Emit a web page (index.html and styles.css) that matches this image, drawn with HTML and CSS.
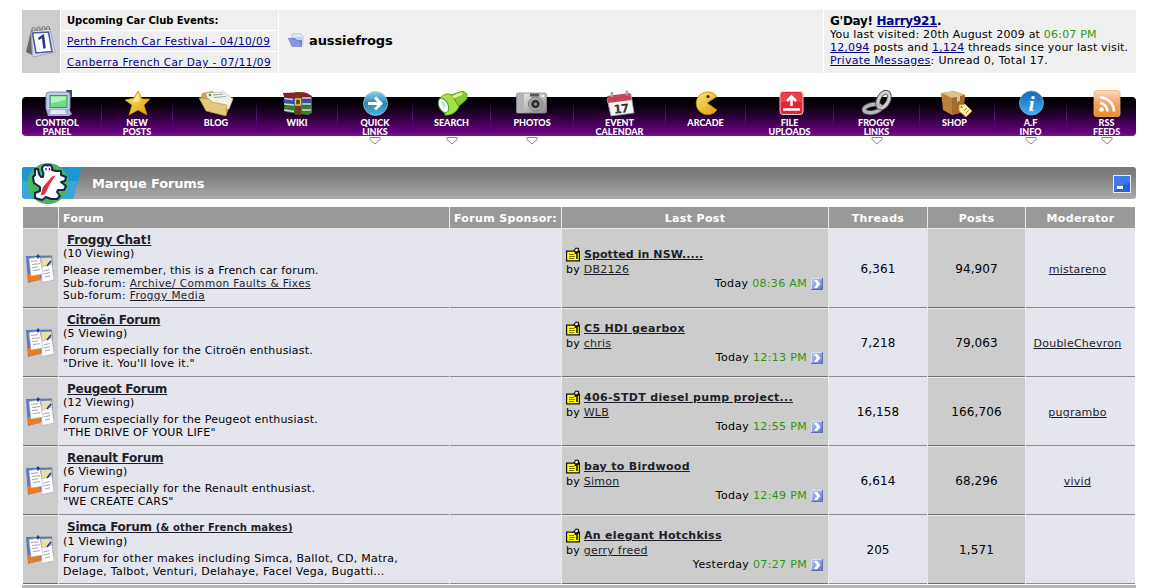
FILE: index.html
```html
<!DOCTYPE html>
<html lang="en">
<head>
<meta charset="utf-8">
<title>aussiefrogs</title>
<link rel="stylesheet" href="styles.css">
</head>
<body>
<svg class="defs" width="0" height="0">
  <defs>
    <linearGradient id="gb" x1="0" y1="0" x2="0" y2="1"><stop offset="0" stop-color="#8fd0ea"/><stop offset=".5" stop-color="#2a86b4"/><stop offset="1" stop-color="#43b9dc"/></linearGradient>
    <linearGradient id="gi" x1="0" y1="0" x2="0" y2="1"><stop offset="0" stop-color="#1b62b4"/><stop offset="1" stop-color="#3fb2f0"/></linearGradient>
    <linearGradient id="gr" x1="0" y1="0" x2="0" y2="1"><stop offset="0" stop-color="#fbd9bd"/><stop offset=".5" stop-color="#f0a468"/><stop offset="1" stop-color="#ee8a20"/></linearGradient>
    <linearGradient id="gy" x1="0" y1="0" x2="1" y2="1"><stop offset="0" stop-color="#ffe873"/><stop offset="1" stop-color="#e09a08"/></linearGradient>
    <linearGradient id="gm" x1="0" y1="0" x2="1" y2="1"><stop offset="0" stop-color="#f4f4f4"/><stop offset="1" stop-color="#8c8c8c"/></linearGradient>
    <linearGradient id="gbtn" x1="0" y1="0" x2="1" y2="1"><stop offset="0" stop-color="#c2cef2"/><stop offset="1" stop-color="#5a74c8"/></linearGradient>
    <symbol id="clip" viewBox="0 0 28 31">
      <path d="M0 3L26 2.500 27.500 22 2 30Z" fill="#5a78c8"/>
      <path d="M1.500 21L14 21 15 27 2.500 29.500Z" fill="#e87c24"/>
      <path d="M15 5L25.500 4.500 26.500 17 16 16Z" fill="#e8e0a0"/>
      <path d="M15 14L26 11 28 27 16 29.500Z" fill="#fff" stroke="#a6a6b0" stroke-width=".6"/>
      <path d="M3 5.500L14 4 17 21 5 23Z" fill="#fff" stroke="#b0b0b8" stroke-width=".6"/>
      <path d="M5 8.500l7-.8M6 11.500l8-.9M6 14.500l6-.6M7 17.500l7-.8M17.500 18l6-1.500M18 21l6-1.500M19 24l5-1.200" stroke="#9a9aa2" stroke-width=".9"/>
      <path d="M12 1.500v4M10.500 3.500h3.500M21 13l4-5" stroke="#28388c" stroke-width="1.700"/>
    </symbol>
    <symbol id="note" viewBox="0 0 14 15">
      <path d="M.6 4.100H13.400V13.900H.6Z" fill="#ff0" stroke="#111" stroke-width="1.200"/>
      <path d="M3 7.500h5M3 9.500h6M3 11.500h5" stroke="#7a7400"/>
      <path d="M8 3.500L10 1 12.500 1.500 12.500 4 10 5.500Z" fill="#ddd" stroke="#111" stroke-width="1.100"/>
      <path d="M8.500 6.500l5-2M11 6v6" stroke="#111" stroke-width="1.500"/>
    </symbol>
    <symbol id="go" viewBox="0 0 12 12">
      <path d="M0 0H12V12H0Z" fill="url(#gbtn)"/><path d="M.5 12V.5H12" fill="none" stroke="#d4dcf6"/><path d="M0 11.500H11.500V0" fill="none" stroke="#5c70b4"/>
      <path d="M3 2H6.200L9.500 6 6.200 10H3L5.800 6Z" fill="#fff"/>
    </symbol>
    <symbol id="drop" viewBox="0 0 12 8"><path d="M1 .5H11V2.500L6 7 1 2.500Z" fill="#fff" stroke="#7d8a98"/></symbol>
  </defs>
</svg>

<header class="top">
  <div class="cal">
    <svg width="30" height="34" viewBox="0 0 30 34"><path d="M5 6L0 27l6 3Z" fill="#666"/><path d="M5 6L24 4 29 27 7 32Z" fill="#dfe1ec" stroke="#9a9cae" stroke-width=".8"/><path d="M6.500 8L22.500 7 26 26.500 10 28Z" fill="#fff" stroke="#4a58ae" stroke-width="1.600"/><path d="M6 7V4c0-2 3-2 3 0v2M11 6V3.500c0-2 3-2 3 0v2M16 5.500V3c0-2 3-2 3 0v2M20.500 5V3c0-2 3-2 3 0v2" fill="none" stroke="#666" stroke-width="1"/><path d="M12.500 14L17 11 18.500 23.500" fill="none" stroke="#26389c" stroke-width="2.600"/></svg>
  </div>
  <div class="events">
    <div class="ev evh">Upcoming Car Club Events:</div>
    <div class="ev"><a>Perth French Car Festival - 04/10/09</a></div>
    <div class="ev"><a>Canberra French Car Day - 07/11/09</a></div>
  </div>
  <div class="site">
    <svg width="16" height="15" viewBox="0 0 16 15"><path d="M4 1l8-1 3 3v9H5Z" fill="#dfe9f6" stroke="#a6b6d4" stroke-width=".6"/><path d="M6 4h8v6H6Z" fill="#b4d8ee"/><path d="M0 5h7l2 2h5v7H4Z" fill="#6f86d8"/><path d="M0 5l4 9h10l-3-6Z" fill="#8598e0"/></svg>
    <b>aussiefrogs</b>
  </div>
  <div class="user">
    <div class="hi">G'Day! <a>Harry921</a>.</div>
    <div class="u1">You last visited: 20th August 2009 at <i>06:07 PM</i></div>
    <div class="u2"><a>12,094</a> posts and <a>1,124</a> threads since your last visit.</div>
    <div class="u3"><a>Private Messages</a>: Unread 0, Total 17.</div>
  </div>
</header>

<nav class="nav">
  <div class="item first"><svg class="ic" viewBox="0 0 34 30"><path d="M26 2h6v7l-3 2Z" fill="#444b60"/><rect x="6" y="4" width="24" height="19" rx="3" fill="#c3cdea" stroke="#7f8cae"/><rect x="10" y="7.500" width="17" height="12" fill="#6fdc88" stroke="#3e9060"/><path d="M11 8.500h15v3l-15 4Z" fill="#b4f4bc"/><path d="M6 21h23l3 5-3 2H8Z" fill="#a4b0d4"/><path d="M11 22h14l1 4H10Z" fill="#e2e8f8"/></svg><span>CONTROL<br>PANEL</span></div>
  <div class="item"><svg class="ic" viewBox="0 0 34 30"><path d="M18 3L22 11 30 11 24 17 27 27 18 22 9 27 12 17 5 12 14 10Z" fill="url(#gy)" stroke="#c88a10" stroke-width=".8"/><path d="M18 5l2 8-8 2Z" fill="#fff2a0" opacity=".8"/></svg><span>NEW<br>POSTS</span></div>
  <div class="item wideitem"><svg class="ic wide" viewBox="0 0 36 30"><path d="M4 5L14 3 30 12 35 9 28 28 12 24 2 12Z" fill="#c8a450"/><path d="M8 5L26 4 35 11 31 21 12 20Z" fill="#f2f2ee" stroke="#b4b4a8" stroke-width=".6"/><path d="M15 7l10-1M16 9.500l12-1" stroke="#9aa6a0"/><path d="M1 10L11 11 14 14 29 17 28 28 8 23Z" fill="#e4c97c" stroke="#a88838" stroke-width=".6"/><circle cx="12" cy="7" r="1.300" fill="#2ca840"/></svg><span>BLOG</span></div>
  <div class="item"><svg class="ic" viewBox="0 0 34 30"><path d="M3 5L24 4 32 8V13H6Z" fill="#9a3c4c"/><path d="M3 5L5 11 31 12V8L27 5Z" fill="#7c2434"/><path d="M3 12H32V18H5Z" fill="#3454a8"/><path d="M4 18H32V25L28 27 5 24Z" fill="#328234"/><path d="M4 10.500l9 1M4 16l10 1M4 22l10 1.500M22 10h9M22 16h9M22 22h9" stroke="#d8d8d0" stroke-width="1.300"/><path d="M15 4h6v23h-6Z" fill="#6e3c14"/><path d="M15.500 11h5v6h-5Z" fill="none" stroke="#e8c850" stroke-width="1.300"/></svg><span>WIKI</span></div>
  <div class="item"><svg class="ic" viewBox="0 0 34 30"><circle cx="17.500" cy="15.500" r="12" fill="url(#gb)" stroke="#9cc4d8" stroke-width=".8"/><path d="M10 15.500H23M17 9.500L23 15.500 17 21.500" fill="none" stroke="#fff" stroke-width="3"/></svg><span>QUICK<br>LINKS</span><svg class="dd"><use href="#drop"/></svg></div>
  <div class="item"><svg class="ic" viewBox="0 0 34 30"><path d="M13 8L28 3 32 6 32 11 22 20Z" fill="#88cc30" stroke="#4c8c14" stroke-width=".8"/><path d="M4 11C8 6 13 5 17 7L24 19C21 25 15 28 10 27Z" fill="#a8e048" stroke="#4c8c14" stroke-width=".8"/><path d="M18 9l9-3.500" stroke="#dcf890" stroke-width="2.500"/><ellipse cx="8.500" cy="17.500" rx="4.600" ry="7.600" transform="rotate(-25 8.500 17.500)" fill="#effcef" stroke="#4c9438"/><path d="M7 14l3 5" stroke="#b8e0c0" stroke-width="2"/></svg><span>SEARCH</span><svg class="dd"><use href="#drop"/></svg></div>
  <div class="item"><svg class="ic" viewBox="0 0 34 30"><rect x="1.500" y="5" width="30" height="20" rx="1.500" fill="url(#gm)" stroke="#888" stroke-width=".8"/><path d="M2 5h7v20H2Z" fill="#b4b4b4"/><rect x="15" y="5.500" width="9" height="3" fill="#555"/><circle cx="20.500" cy="16" r="7" fill="#a8a8a8" stroke="#777"/><circle cx="20.500" cy="16" r="4.300" fill="#333"/><circle cx="20.500" cy="16" r="1.500" fill="#99a"/><circle cx="28" cy="8" r="1.300" fill="#fff"/></svg><span>PHOTOS</span><svg class="dd"><use href="#drop"/></svg></div>
  <div class="item"><svg class="ic" viewBox="0 0 34 30"><path d="M4 11L28 6 31 25 8 28Z" fill="#f6f6f6" stroke="#999" stroke-width=".8"/><path d="M4 8L27 5 28.500 12 5 15Z" fill="#c4445a"/><path d="M9 4v5M24 2.500v5" stroke="#a8a8a8" stroke-width="2.600"/><text class="cal17" x="18" y="25" transform="rotate(-6 18 22)">17</text></svg><span>EVENT<br>CALENDAR</span></div>
  <div class="item"><svg class="ic" viewBox="0 0 34 30"><path d="M28 8.500A11.500 11.500 0 1 0 28 22L18 15Z" fill="url(#gy)" stroke="#b88810" stroke-width=".8"/><circle cx="19" cy="8.500" r="1.500" fill="#222"/></svg><span>ARCADE</span></div>
  <div class="item"><svg class="ic" viewBox="0 0 34 30"><rect x="7" y="3.500" width="23" height="23" rx="3" fill="#e22434" stroke="#ffd0d0"/><path d="M8 5h21v9H8Z" fill="#ee5058" opacity=".7"/><path d="M18.500 18V9M14 13L18.500 8.500 23 13" fill="none" stroke="#fff" stroke-width="2.500"/><path d="M10 21.500H27" stroke="#fff" stroke-width="2.500"/></svg><span>FILE<br>UPLOADS</span></div>
  <div class="item"><svg class="ic" viewBox="0 0 34 30"><g fill="none"><ellipse cx="12.500" cy="20.500" rx="8.500" ry="4" transform="rotate(-10 12.500 20.500)" stroke="#555" stroke-width="5"/><ellipse cx="12.500" cy="20.500" rx="8.500" ry="4" transform="rotate(-10 12.500 20.500)" stroke="#b8b8b8" stroke-width="3.200"/><ellipse cx="23.500" cy="12" rx="4.800" ry="8.500" transform="rotate(28 23.500 12)" stroke="#555" stroke-width="4.800"/><ellipse cx="23.500" cy="12" rx="4.800" ry="8.500" transform="rotate(28 23.500 12)" stroke="#cfcfcf" stroke-width="3"/><path d="M17 16.500Q21 17 21 20" stroke="#b8b8b8" stroke-width="3.200"/></g></svg><span>FROGGY<br>LINKS</span><svg class="dd"><use href="#drop"/></svg></div>
  <div class="item shop"><svg class="ic" viewBox="0 0 34 30"><path d="M3 5L16 3 27 7 25 24 14 27 5 22Z" fill="#b8803c"/><path d="M3 5L16 3 27 7 14 10Z" fill="#e4bc7c"/><path d="M14 10L27 7 25 24 14 27Z" fill="#a46c2c"/><path d="M8 4.500L19 9V14L22 13V8L12 3.500Z" fill="#dcc49c"/><path d="M21 17L27 16 34 23 28 29 21 23Z" fill="#fff0ac" stroke="#b89030" stroke-width=".8"/><circle cx="23.500" cy="19" r="1" fill="#8c6420"/><path d="M26 23l3-3M28 25l3-3" stroke="#b08020"/></svg><span>SHOP</span></div>
  <div class="item"><svg class="ic" viewBox="0 0 34 30"><circle cx="17.500" cy="15" r="12" fill="url(#gi)" stroke="#78b4e0" stroke-width=".8"/><text class="info" x="17.500" y="22.500">i</text></svg><span>A.F<br>INFO</span><svg class="dd"><use href="#drop"/></svg></div>
  <div class="item last"><svg class="ic" viewBox="0 0 34 30"><rect x="4" y="2.500" width="26" height="26" rx="2.500" fill="url(#gr)" stroke="#f4b070" stroke-width=".8"/><circle cx="11.500" cy="21.500" r="2.300" fill="#fff"/><path d="M10 15A8.500 8.500 0 0 1 17.500 23.500M10 9.500A14 14 0 0 1 24 23.500" fill="none" stroke="#fff" stroke-width="2.700"/></svg><span>RSS<br>FEEDS</span><svg class="dd"><use href="#drop"/></svg></div>
</nav>

<section class="bar">
  <svg class="frog" width="62" height="46" viewBox="0 0 62 46"><path d="M3 6H60L51 37.500H3Q0 37.500 0 34.500V9Q0 6 3 6Z" fill="#1c98d0"/><path d="M0 20H56L51 37.500H3Q0 37.500 0 34.500Z" fill="#35a8dc"/><circle cx="26" cy="22.500" r="20.500" fill="#4cb45c"/><path d="M21.500 12C18 6 22 3 25.500 4.500C29 3 31 6 30 9L34 10L39 10L39 14L44 16L43 20L39 21L44 25L42 29L36 29L35 31L38 35L35 38L29 38L24 36L20 39L13 37L13 32L18 30L18 26L12 22L11 16L13 14L13 8L16 8L17 13L19 16L21 16Z" fill="#fff" stroke="#182058" stroke-width="2" stroke-linejoin="round"/><path d="M30 15.500L33.500 14.500 28 23 23 33 18.500 34.500 21 26Z" fill="#e82c38"/><path d="M24 7v2.500M27.500 7v2" stroke="#182058" stroke-width="1.200"/></svg>
  <h2>Marque Forums</h2>
  <svg class="min" width="18" height="18" viewBox="0 0 18 18"><rect x=".5" y=".5" width="17" height="17" fill="#2462e8" stroke="#e8ecf8"/><path d="M1 1H17V7Q8 10 1 17Z" fill="#5488f0" opacity=".6"/><path d="M4 12.500H10" stroke="#fff" stroke-width="3"/></svg>
</section>

<main class="grid">
  <div class="h"></div><div class="h l">Forum</div><div class="h sp">Forum Sponsor:</div><div class="h">Last Post</div><div class="h">Threads</div><div class="h">Posts</div><div class="h">Moderator</div>

  <div class="d ico"><svg><use href="#clip"/></svg></div>
  <div class="f"><a class="t">Froggy Chat!</a><div class="v">(10 Viewing)</div><div class="p">Please remember, this is a French car forum.</div><div class="s">Sub-forum: <a>Archive/ Common Faults &amp; Fixes</a></div><div class="s">Sub-forum: <a>Froggy Media</a></div></div>
  <div class="f"></div>
  <div class="d lp"><div class="lt"><svg><use href="#note"/></svg><a class="dots">Spotted in NSW.....</a></div><div class="by">by <a>DB2126</a></div><div class="when">Today <i>08:36 AM</i><svg><use href="#go"/></svg></div></div>
  <div class="f n">6,361</div><div class="d n">94,907</div><div class="f m"><a>mistareno</a></div>

  <div class="d ico"><svg><use href="#clip"/></svg></div>
  <div class="f"><a class="t">Citroën Forum</a><div class="v">(5 Viewing)</div><div class="p">Forum especially for the Citroën enthusiast.<br>"Drive it. You'll love it."</div></div>
  <div class="f"></div>
  <div class="d lp"><div class="lt"><svg><use href="#note"/></svg><a>C5 HDI gearbox</a></div><div class="by">by <a>chris</a></div><div class="when">Today <i>12:13 PM</i><svg><use href="#go"/></svg></div></div>
  <div class="f n">7,218</div><div class="d n">79,063</div><div class="f m"><a>DoubleChevron</a></div>

  <div class="d ico"><svg><use href="#clip"/></svg></div>
  <div class="f"><a class="t">Peugeot Forum</a><div class="v">(12 Viewing)</div><div class="p">Forum especially for the Peugeot enthusiast.<br>"THE DRIVE OF YOUR LIFE"</div></div>
  <div class="f"></div>
  <div class="d lp"><div class="lt"><svg><use href="#note"/></svg><a>406-STDT diesel pump project...</a></div><div class="by">by <a>WLB</a></div><div class="when">Today <i>12:55 PM</i><svg><use href="#go"/></svg></div></div>
  <div class="f n">16,158</div><div class="d n">166,706</div><div class="f m"><a>pugrambo</a></div>

  <div class="d ico"><svg><use href="#clip"/></svg></div>
  <div class="f"><a class="t">Renault Forum</a><div class="v">(6 Viewing)</div><div class="p">Forum especially for the Renault enthusiast.<br>"WE CREATE CARS"</div></div>
  <div class="f"></div>
  <div class="d lp"><div class="lt"><svg><use href="#note"/></svg><a>bay to Birdwood</a></div><div class="by">by <a>Simon</a></div><div class="when">Today <i>12:49 PM</i><svg><use href="#go"/></svg></div></div>
  <div class="f n">6,614</div><div class="d n">68,296</div><div class="f m"><a>vivid</a></div>

  <div class="d ico"><svg><use href="#clip"/></svg></div>
  <div class="f"><a class="t">Simca Forum <small>(&amp; other French makes)</small></a><div class="v">(1 Viewing)</div><div class="p wide-p">Forum for other makes including Simca, Ballot, CD, Matra,<br>Delage, Talbot, Venturi, Delahaye, Facel Vega, Bugatti...</div></div>
  <div class="f"></div>
  <div class="d lp"><div class="lt"><svg><use href="#note"/></svg><a>An elegant Hotchkiss</a></div><div class="by">by <a>gerry freed</a></div><div class="when">Yesterday <i>07:27 PM</i><svg><use href="#go"/></svg></div></div>
  <div class="f n">205</div><div class="d n">1,571</div><div class="f m"></div>
</main>
<div class="foot"></div>
</body>
</html>
```
FILE: styles.css
```css
* { box-sizing: border-box; }
body { margin: 0; height: 588px; overflow: hidden; background: #fff; color: #000; font: 11px/13px "DejaVu Sans", Verdana, sans-serif; letter-spacing: .24px; white-space: nowrap; }
a { text-decoration: underline; }
i { font-style: normal; color: #2f9410; }
svg { display: block; flex: none; }
.defs { position: absolute; }

.top { display: grid; grid-template-columns: 38px 218px 545px 313px; margin: 10px 0 0 22px; height: 63px; background: #efefef; width: 1114px; }
.top a { color: #00008b; }
.cal { background: #cdcdcd; display: flex; align-items: center; justify-content: center; }
.events { display: grid; grid-template-rows: 20px 20px 21px; gap: 1px; border-left: 1px solid #fff; background: #fff; }
.ev { background: #efefef; padding: 0 0 0 6px; line-height: 21px; font-size: 10.5px; letter-spacing: .42px; }
.evh { font-weight: bold; font-size: 10px; letter-spacing: -.05px; }
.site { border-left: 1px solid #fff; display: flex; align-items: center; gap: 5px; padding: 0 0 2px 9px; font-size: 13px; letter-spacing: -.1px; }
.user { border-left: 1px solid #fff; padding: 4px 0 0 6px; letter-spacing: .2px; }
.hi { font-size: 12px; font-weight: bold; line-height: 14px; letter-spacing: -.3px; }
.u2 { letter-spacing: .17px; }
.u3 { letter-spacing: .3px; }

.nav { display: grid; grid-template-columns: 80px 71px 84px 81px 75px 78px 83px 92px 80px 88px 86px 75px 72px 69px; margin: 24px 0 0 22px; width: 1114px; height: 39px; border-radius: 4px; background: linear-gradient(#000 0, #0a000e 25%, #64007e 90%, #7c1494 100%); }
.item { position: relative; display: flex; flex-direction: column; align-items: center; border-right: 1px solid; border-image: linear-gradient(transparent 10%, #5a1478 50%, transparent 85%) 1; color: #fff; font: 900 9px/9px Lato, sans-serif; letter-spacing: 0; text-align: center; height: 39px; }
.item.last { border: 0; padding-left: 10px; }
.item.first { padding-right: 9px; }
.item.shop { padding-right: 5px; }
.item.wideitem { padding-left: 3px; }
.ic { width: 34px; height: 30px; margin-top: -9px; }
.ic.wide { width: 36px; }
.dd { position: absolute; width: 12px; height: 8px; left: calc(50% - 6px); top: 40px; }
.last .dd { left: calc(50% - 1px); }
.cal17 { font: bold 12px "DejaVu Sans"; fill: #333; text-anchor: middle; letter-spacing: -1px; }
.info { font: italic bold 22px "Liberation Serif"; fill: #fff; text-anchor: middle; }

.bar { display: flex; align-items: center; margin: 31px 0 0 22px; width: 1114px; height: 32px; border-radius: 3px; background: linear-gradient(#787878, #808080 30%, #929292 60%, #adadad); padding-right: 5px; }
.frog { margin-top: 1px; }
.bar h2 { margin: 0 auto 0 8px; font-size: 13px; color: #fff; letter-spacing: -.15px; }
.min { margin-top: 2px; }

.grid { display: grid; grid-template-columns: 35px 390px 111px 266px 98px 97px 109px; grid-template-rows: 21px 79px 68px 68px 68px 68px; gap: 1px; width: 1112px; margin: 8px 0 0 23px; background: #e9e9ea; }
.h { background: #999; color: #fff; font-weight: bold; text-align: center; line-height: 23px; letter-spacing: .35px; overflow: hidden; }
.h.l { text-align: left; padding-left: 4px; }
.f { background: #e5e5ee; border-bottom: 1px solid #8c8c94; padding: 4px 4px 0; }
.d { background: #ccc; border-bottom: 1px solid #707070; }
.f a, .d a { color: #1e1e28; }
.ico { display: flex; align-items: center; padding-left: 3px; }
.ico svg { width: 28px; height: 31px; }
.t { display: block; width: fit-content; font-size: 12px; font-weight: bold; line-height: 14px; margin-left: 4px; letter-spacing: -.25px; }
.t small { font-size: 10px; letter-spacing: .17px; }
.v { letter-spacing: .2px; }
.p { margin-top: 4px; letter-spacing: .2px; }
.wide-p { letter-spacing: .26px; }
.s { font-size: 10.5px; line-height: 12px; letter-spacing: .43px; }
.lp { display: flex; flex-direction: column; justify-content: center; padding: 0 5px 0 4px; }
.lt { display: flex; align-items: center; gap: 4px; font-weight: bold; line-height: 15px; letter-spacing: .31px; }
.lt svg { width: 14px; height: 15px; }
.dots { letter-spacing: .08px; }
.by { line-height: 15px; }
.when { display: flex; justify-content: flex-end; white-space: pre; line-height: 13px; letter-spacing: .33px; }
.when svg { width: 12px; height: 12px; margin: 1px 0 0 4px; }
.n { display: flex; align-items: center; justify-content: center; font-size: 12px; padding: 2px 0 0; letter-spacing: .1px; }
.m { display: flex; align-items: center; justify-content: center; padding: 2px 6px 0 0; }
.foot { margin: 1px 0 0 22px; width: 1114px; height: 4px; background: #b8b8b8; }
```
